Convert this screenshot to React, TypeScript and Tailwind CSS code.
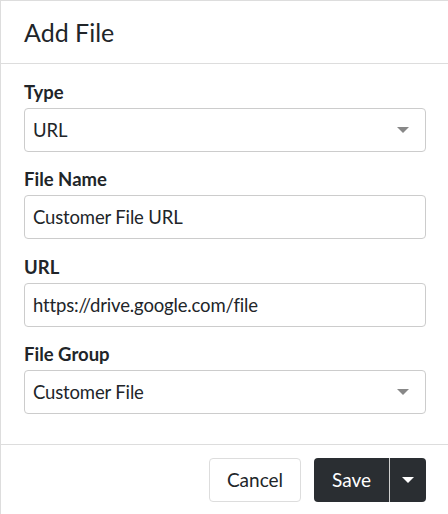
import React from 'react';

const fields = [
  { label: 'Type', value: 'URL', select: true },
  { label: 'File Name', value: 'Customer File URL', select: false },
  { label: 'URL', value: 'https://drive.google.com/file', select: false },
  { label: 'File Group', value: 'Customer File', select: true },
];

function Caret({ className }: { className: string }) {
  return (
    <svg width="12" height="6" viewBox="0 0 12 6" className={className}>
      <path d="M0 0h12L6 6z" fill="currentColor" />
    </svg>
  );
}

export default function App() {
  return (
    <div className="w-[448px] h-[514px] bg-white border-l border-t border-[#dddddd] text-[#212529] font-['Lato',sans-serif] flex flex-col">
      {/* Header */}
      <div className="h-[63px] shrink-0 border-b border-[#dddddd] flex items-center pl-[23px]">
        <h2 className="text-[25px] leading-[32px] font-normal">Add File</h2>
      </div>

      {/* Body */}
      <div className="pl-[23px] pr-[22px] pb-[30px] border-b border-[#dddddd]">
        {fields.map((f) => (
          <div key={f.label}>
            <div className="h-[43.5px] flex items-end pb-[5px]">
              <label className="text-[18.5px] leading-[22px] font-bold">{f.label}</label>
            </div>
            <div className="h-[44px] rounded-[4px] border border-[#cccccc] flex items-center pl-[8px] pr-[16px]">
              <span className="flex-1 text-[18.5px] tracking-[-0.15px] leading-[24px]">{f.value}</span>
              {f.select && <Caret className="text-[#888888]" />}
            </div>
          </div>
        ))}
      </div>

      {/* Footer */}
      <div className="flex justify-end gap-[13px] pt-[13px] pr-[22px]">
        <button className="w-[92px] h-[44px] rounded-[4px] border border-[#dddddd] bg-white text-[19px]">
          Cancel
        </button>
        <div className="flex h-[44px] rounded-[4px] bg-[#2a2e32] text-white overflow-hidden">
          <button className="w-[76px] text-[19px] border-r border-[#d0d0d0]">Save</button>
          <button className="w-[36px] flex items-center justify-center">
            <Caret className="text-white" />
          </button>
        </div>
      </div>
    </div>
  );
}
